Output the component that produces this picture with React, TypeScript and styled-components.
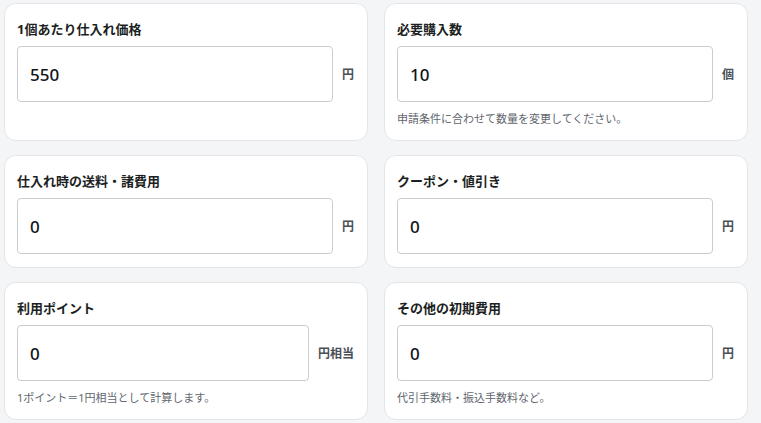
import React from 'react';
import styled, { createGlobalStyle } from 'styled-components';

type FieldProps = {
  label: string,
  value: string,
  unit: string,
  hint?: string
};

const GlobalStyle = createGlobalStyle`
  html, body {
    margin: 0;
    padding: 0;
    background: #f4f5f7;
  }
  body {
    font-family: "Noto Sans", "Noto Sans CJK JP", sans-serif;
    color: #1f2328;
  }
`;

const Grid = styled.div`
  display: grid;
  grid-template-columns: 364px 364px;
  column-gap: 16px;
  row-gap: 14px;
  padding: 3px 0 0 4px;
`;

const Card = styled.div`
  background: #fff;
  border: 1px solid #e3e5e8;
  border-radius: 12px;
  padding: 15px 13px 13px 12px;
  display: flex;
  flex-direction: column;
`;

const Label = styled.div`
  font-size: 13px;
  font-weight: 700;
  line-height: 20px;
  color: #1c1f23;
  margin-bottom: 7px;
`;

const InputRow = styled.div`
  display: flex;
  align-items: center;
  gap: 9px;
`;

const Input = styled.input`
  flex: 1;
  min-width: 0;
  height: 56px;
  box-sizing: border-box;
  border: 1px solid #c9ccd1;
  border-radius: 4px;
  padding: 0 12px;
  font-family: "Noto Sans", "Noto Sans CJK JP", sans-serif;
  font-size: 17px;
  font-weight: 500;
  color: #111418;
  background: #fff;
  outline: none;
`;

const Unit = styled.span`
  font-size: 12px;
  font-weight: 600;
  color: #4a4f57;
  white-space: nowrap;
`;

const Hint = styled.div`
  font-size: 11px;
  line-height: 17px;
  color: #61666e;
  margin-top: 8px;
`;

const Field: React.FC<FieldProps> = props => {
  return (
    <Card>
      <Label>{props.label}</Label>
      <InputRow>
        <Input defaultValue={props.value} />
        <Unit>{props.unit}</Unit>
      </InputRow>
      {props.hint && <Hint>{props.hint}</Hint>}
    </Card>
  );
};

const fields: FieldProps[] = [
  { label: '1個あたり仕入れ価格', value: '550', unit: '円' },
  { label: '必要購入数', value: '10', unit: '個', hint: '申請条件に合わせて数量を変更してください。' },
  { label: '仕入れ時の送料・諸費用', value: '0', unit: '円' },
  { label: 'クーポン・値引き', value: '0', unit: '円' },
  { label: '利用ポイント', value: '0', unit: '円相当', hint: '1ポイント＝1円相当として計算します。' },
  { label: 'その他の初期費用', value: '0', unit: '円', hint: '代引手数料・振込手数料など。' }
];

const App: React.FC = () => {
  return (
    <>
      <GlobalStyle />
      <Grid>
        {fields.map(f => (
          <Field key={f.label} {...f} />
        ))}
      </Grid>
    </>
  );
};

export default App;
